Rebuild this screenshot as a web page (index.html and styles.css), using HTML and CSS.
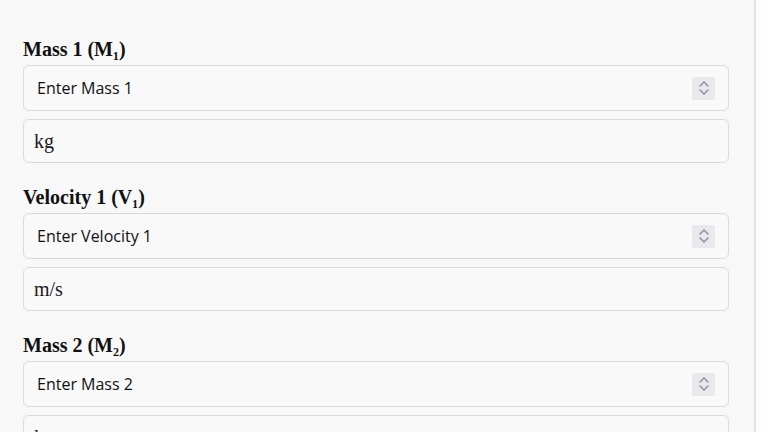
FILE: index.html
```html
<!DOCTYPE html>
<html lang="en">
<head>
<meta charset="utf-8">
<title>Collision Calculator</title>
<link rel="stylesheet" href="styles.css">
</head>
<body>
<div class="panel">
  <div class="group">
    <label class="label" for="m1">Mass 1 (M₁)</label>
    <div class="field">
      <input class="num" id="m1" type="text" placeholder="Enter Mass 1">
      <span class="spin"><svg width="12" height="16" viewBox="0 0 12 16"><path d="M2 6 L6 2 L10 6 M2 10 L6 14 L10 10" fill="none" stroke="#8a8a94" stroke-width="1.4" stroke-linecap="round" stroke-linejoin="round"/></svg></span>
    </div>
    <div class="unit">kg</div>
  </div>
  <div class="group">
    <label class="label" for="v1">Velocity 1 (V₁)</label>
    <div class="field">
      <input class="num" id="v1" type="text" placeholder="Enter Velocity 1">
      <span class="spin"><svg width="12" height="16" viewBox="0 0 12 16"><path d="M2 6 L6 2 L10 6 M2 10 L6 14 L10 10" fill="none" stroke="#8a8a94" stroke-width="1.4" stroke-linecap="round" stroke-linejoin="round"/></svg></span>
    </div>
    <div class="unit">m/s</div>
  </div>
  <div class="group">
    <label class="label" for="m2">Mass 2 (M₂)</label>
    <div class="field">
      <input class="num" id="m2" type="text" placeholder="Enter Mass 2">
      <span class="spin"><svg width="12" height="16" viewBox="0 0 12 16"><path d="M2 6 L6 2 L10 6 M2 10 L6 14 L10 10" fill="none" stroke="#8a8a94" stroke-width="1.4" stroke-linecap="round" stroke-linejoin="round"/></svg></span>
    </div>
    <div class="unit">kg</div>
  </div>
</div>
</body>
</html>
```

FILE: styles.css
```css
html, body {
  margin: 0;
  padding: 0;
  background: #fdfdfd;
}

.panel {
  width: 756px;
  box-sizing: border-box;
  min-height: 432px;
  padding: 38px 25px 0 23px;
  background: #f8f8f8;
  border-right: 2px solid #e4e4e4;
  font-family: "Liberation Serif", "Times New Roman", serif;
  color: #111;
}

.group {
  display: flex;
  flex-direction: column;
  margin-bottom: 23px;
}

.label {
  display: block;
  font-weight: bold;
  font-size: 20px;
  line-height: 23px;
  margin-bottom: 4px;
  color: #111;
}

.field {
  display: flex;
  align-items: center;
  height: 46px;
  box-sizing: border-box;
  border: 1px solid #dadada;
  border-radius: 6px;
  background: #f9f9f9;
  padding: 0 13px;
  margin-bottom: 8px;
}

.num {
  flex: 1;
  border: none;
  outline: none;
  background: transparent;
  padding: 0;
  margin: 0;
  font-family: "Open Sans", "DejaVu Sans", sans-serif;
  font-size: 16px;
  color: #111;
}

.num::placeholder {
  color: #111;
  opacity: 1;
}

.spin {
  display: flex;
  align-items: center;
  justify-content: center;
  width: 23px;
  height: 23px;
  background: #e9e9ed;
  border-radius: 2px;
}

.unit {
  height: 44px;
  box-sizing: border-box;
  border: 1px solid #dadada;
  border-radius: 6px;
  background: #f9f9f9;
  padding: 0 10px;
  display: flex;
  align-items: center;
  font-size: 20px;
  color: #1a1a1a;
}
```
